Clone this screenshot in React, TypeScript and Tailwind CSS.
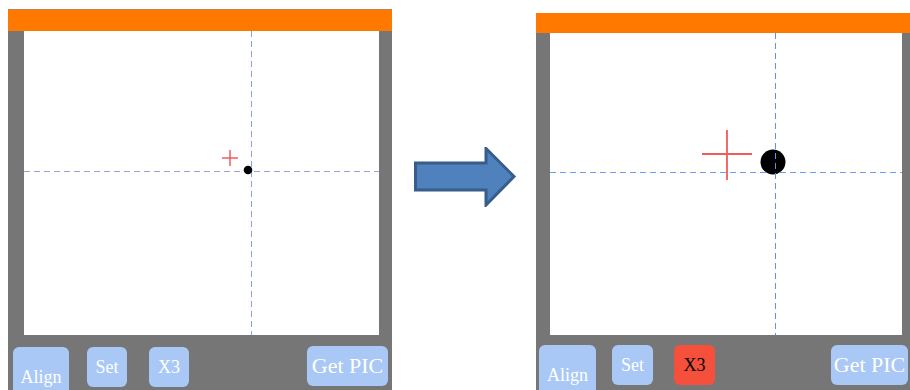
import React from "react";

const font = { fontFamily: '"Liberation Serif", "DejaVu Serif", serif' };

function Btn({ label, cls, text = "text-white" }: { label: string; cls: string; text?: string }) {
  return (
    <div className={`flex items-center justify-center rounded-[6px] leading-none ${cls} ${text}`} style={font}>
      {label}
    </div>
  );
}

function Dashed({ x1, y1, x2, y2, color }: { x1: number; y1: number; x2: number; y2: number; color: string }) {
  return <line x1={x1} y1={y1} x2={x2} y2={y2} stroke={color} strokeWidth={1} strokeDasharray="6 4" />;
}

export default function App() {
  return (
    <div className="relative w-[910px] h-[390px] overflow-hidden bg-white flex items-start">
      {/* Left panel */}
      <div className="ml-[8px] mt-[9px] w-[384px] h-[400px] flex flex-col bg-[#767676]">
        <div className="h-[22px] bg-[#ff7800] border-t border-[#c08050]" />
        <div className="ml-[16px] mr-[13px] h-[304px] bg-white">
          <svg width="355" height="304">
            <Dashed x1={227.5} y1={0} x2={227.5} y2={304} color="#8aa0e8" />
            <Dashed x1={0} y1={140.5} x2={355} y2={140.5} color="#9aa4d4" />
            <line x1={198} y1={127} x2={214} y2={127} stroke="#f25050" strokeWidth={1.4} />
            <line x1={206} y1={119} x2={206} y2={135} stroke="#f25050" strokeWidth={1.4} />
            <circle cx={224} cy={139} r={4.3} fill="#000" />
          </svg>
        </div>
        <div className="flex items-start mt-[12px] pl-[5px] pr-[4px]">
          <Btn label="Align" cls="w-[56px] h-[52px] bg-[#a9c8f5] text-[18px] pt-[8px]" />
          <Btn label="Set" cls="ml-[18px] w-[40px] h-[40px] bg-[#a9c8f5] text-[18px]" />
          <Btn label="X3" cls="ml-[22px] w-[40px] h-[40px] bg-[#a9c8f5] text-[18px]" />
          <div className="flex-1" />
          <Btn label="Get PIC" cls="-mt-[1px] w-[81px] h-[40px] bg-[#a9c8f5] text-[22px]" />
        </div>
      </div>

      {/* Arrow */}
      <div className="ml-[22px] mt-[147px] w-[104px] h-[60px]">
        <svg width="104" height="60" viewBox="0 0 104 60">
          <polygon
            points="1.5,16 72,16 72,1.5 100,29.5 72,58 72,43 1.5,43"
            fill="#4f81bd"
            stroke="#385d8a"
            strokeWidth={3}
            strokeLinejoin="miter"
          />
        </svg>
      </div>

      {/* Right panel */}
      <div className="ml-[18px] mt-[13px] w-[384px] shrink-0 h-[400px] flex flex-col bg-[#767676]">
        <div className="h-[20px] bg-[#ff7800]" />
        <div className="ml-[14px] w-[352px] h-[302px] bg-white">
          <svg width="352" height="302">
            <line x1={152} y1={121} x2={202} y2={121} stroke="#f25a5a" strokeWidth={1.8} />
            <line x1={177} y1={97} x2={177} y2={147} stroke="#f25a5a" strokeWidth={1.8} />
            <Dashed x1={0} y1={139.5} x2={352} y2={139.5} color="#6d9cf2" />
            <circle cx={223} cy={129} r={12.5} fill="#000" />
            <Dashed x1={225.5} y1={0} x2={225.5} y2={302} color="#5f92f0" />
          </svg>
        </div>
        <div className="flex items-start mt-[10px] pl-[3px]">
          <Btn label="Align" cls="w-[57px] h-[52px] bg-[#a9c8f5] text-[18px] pt-[8px]" />
          <Btn label="Set" cls="ml-[16px] w-[41px] h-[40px] bg-[#a9c8f5] text-[18px]" />
          <Btn label="X3" cls="ml-[21px] w-[41px] h-[40px] bg-[#f4503c] text-[18px]" text="text-black" />
          <Btn label="Get PIC" cls="ml-[116px] w-[77px] h-[40px] bg-[#a9c8f5] text-[22px]" />
        </div>
      </div>
    </div>
  );
}
